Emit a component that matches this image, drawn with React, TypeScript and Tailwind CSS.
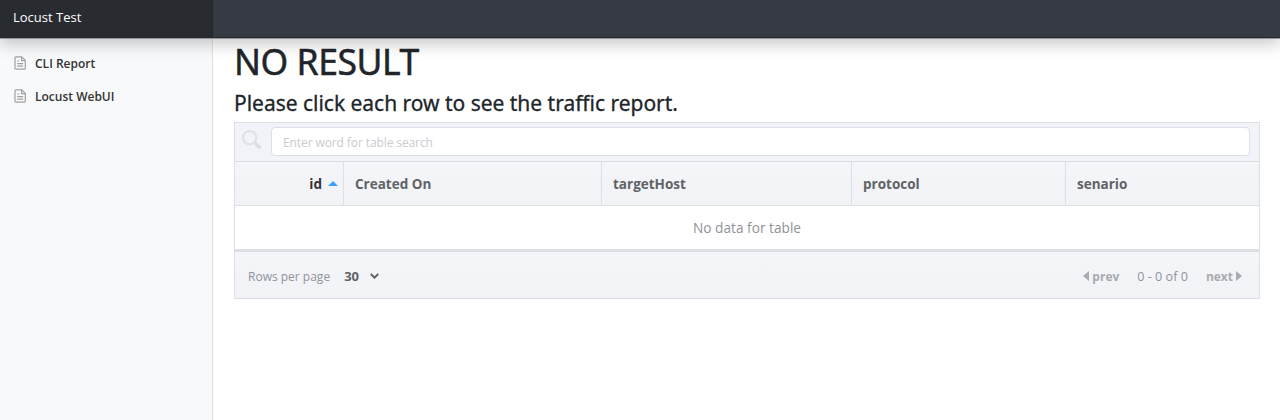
import type { ReactNode } from 'react';

function FileIcon() {
  return (
    <svg width="13" height="14" viewBox="0 0 13 14" fill="none" stroke="#a0a0a0" strokeWidth="1.2" strokeLinejoin="round" className="mb-px shrink-0">
      <path d="M1 1.8Q1 .8 2 .8H7.7L11.3 4.4V12.2Q11.3 13.2 10.3 13.2H2Q1 13.2 1 12.2Z" />
      <path d="M7.6 1V4.6H11.2M3.2 5H5.2M3.2 7.6H9.2M3.2 10.1H9.2" />
    </svg>
  );
}

function NavItem({ children }: { children: ReactNode }) {
  return (
    <a className="flex h-[33px] items-center gap-2 pl-[14px] font-['Open_Sans',sans-serif] text-[12px] font-semibold text-[#333]">
      <FileIcon />
      <span>{children}</span>
    </a>
  );
}

export default function App() {
  return (
    <div className="flex h-[420px] flex-col overflow-hidden bg-white font-['Open_Sans',sans-serif]">
      <header className="relative z-10 flex h-[38px] shrink-0 border-b border-[#25292d] bg-[#363a43] shadow-[0_1px_0_#98999b,0_6px_16px_rgba(0,0,0,0.22)]">
        <div className="flex w-[213px] items-center border-r border-[#23272b] bg-[#282c30] pb-px pl-[13px] text-[13px] font-medium text-white">
          Locust Test
        </div>
      </header>
      <div className="flex min-h-0 flex-1">
        <nav className="w-[213px] shrink-0 border-r border-[#dee0e3] bg-[#f8f9fb] pt-[9px]">
          <NavItem>CLI Report</NavItem>
          <NavItem>Locust WebUI</NavItem>
        </nav>
        <main className="flex-1 pl-[21px] pr-5 text-[#212529]">
          <h1 className="h-[48px] font-['Noto_Sans',sans-serif] text-[35.5px] leading-[46px] tracking-[-0.45px] [-webkit-text-stroke:0.5px_#212529]">NO RESULT</h1>
          <h4 className="h-[36px] font-['Noto_Sans',sans-serif] text-[21px] leading-[34px] tracking-[-0.02px] [-webkit-text-stroke:0.3px_#212529]">Please click each row to see the traffic report.</h4>
          <section className="flex h-[177px] flex-col border border-[#dcdfe6] bg-[#f2f3f8]">
            <div className="flex h-[38px] items-center pl-[7px] pr-[9px]">
              <svg width="20" height="20" viewBox="0 0 20 20" fill="none" stroke="#dcdfe6" className="mb-[5px] shrink-0">
                <circle cx="7.7" cy="7.7" r="6.6" strokeWidth="1.9" />
                <path d="M12.3 12.3L14.4 14.4" strokeWidth="1.7" />
                <path d="M14.5 14.5L17.3 17.1" strokeWidth="3.8" strokeLinecap="round" />
              </svg>
              <input
                placeholder="Enter word for table search"
                className="mb-px ml-[9px] h-[29px] min-w-0 flex-1 rounded border border-[#dcdfe6] bg-white pl-[11px] pt-[2px] text-[12px] tracking-[-0.1px] outline-none placeholder:text-[#c8cbd0]"
              />
            </div>
            <div className="grid h-[45px] grid-cols-[109px_258px_250px_214px_1fr] border-y border-[#dcdfe6] bg-linear-to-b from-[#f4f5f8] to-[#f1f3f6] text-[13.5px] font-bold text-[#606266] *:pt-px">
              <div className="flex items-center justify-end gap-[6px] border-r border-[#dcdfe6] pr-[5px] text-[#333]">
                id
                <svg width="10" height="5" viewBox="0 0 10 5" fill="#409eff" className="mb-px">
                  <path d="M0 5L5 0L10 5Z" />
                </svg>
              </div>
              <div className="flex items-center border-r border-[#dcdfe6] pl-[11px]">Created On</div>
              <div className="flex items-center border-r border-[#dcdfe6] pl-[11px]">targetHost</div>
              <div className="flex items-center border-r border-[#dcdfe6] pl-[11px]">protocol</div>
              <div className="flex items-center pl-[11px]">senario</div>
            </div>
            <div className="flex h-[43px] items-center justify-center bg-white pt-px text-[13.7px] text-[#909399]">No data for table</div>
            <div className="flex flex-1 items-center border-t-[3px] border-[#dcdfe6] bg-linear-to-b from-[#f4f5f8] to-[#f1f3f6] pl-[13px] pr-[17px] pt-[3px] text-[12px] text-[#909399]">
              <span>Rows per page</span>
              <span className="ml-[14px] text-[13px] font-bold text-[#606266]">30</span>
              <svg width="9" height="6" viewBox="0 0 9 6" fill="none" stroke="#606266" strokeWidth="2" className="mb-[2px] ml-[11px]">
                <path d="M.8 1L4.5 4.6L8.2 1" />
              </svg>
              <div className="ml-auto flex items-center gap-[18px] pt-px">
                <span className="flex items-center gap-[3px] font-bold text-[#a8abb0]">
                  <svg width="6" height="10" viewBox="0 0 6 10" fill="#a8abb0" className="mb-[2px]"><path d="M6 0V10L0 5Z" /></svg>
                  prev
                </span>
                <span className="text-[12.6px]">0 - 0 of 0</span>
                <span className="flex items-center gap-[3px] font-bold text-[#a8abb0]">
                  next
                  <svg width="6" height="10" viewBox="0 0 6 10" fill="#a8abb0" className="mb-[2px]"><path d="M0 0V10L6 5Z" /></svg>
                </span>
              </div>
            </div>
          </section>
        </main>
      </div>
    </div>
  );
}
